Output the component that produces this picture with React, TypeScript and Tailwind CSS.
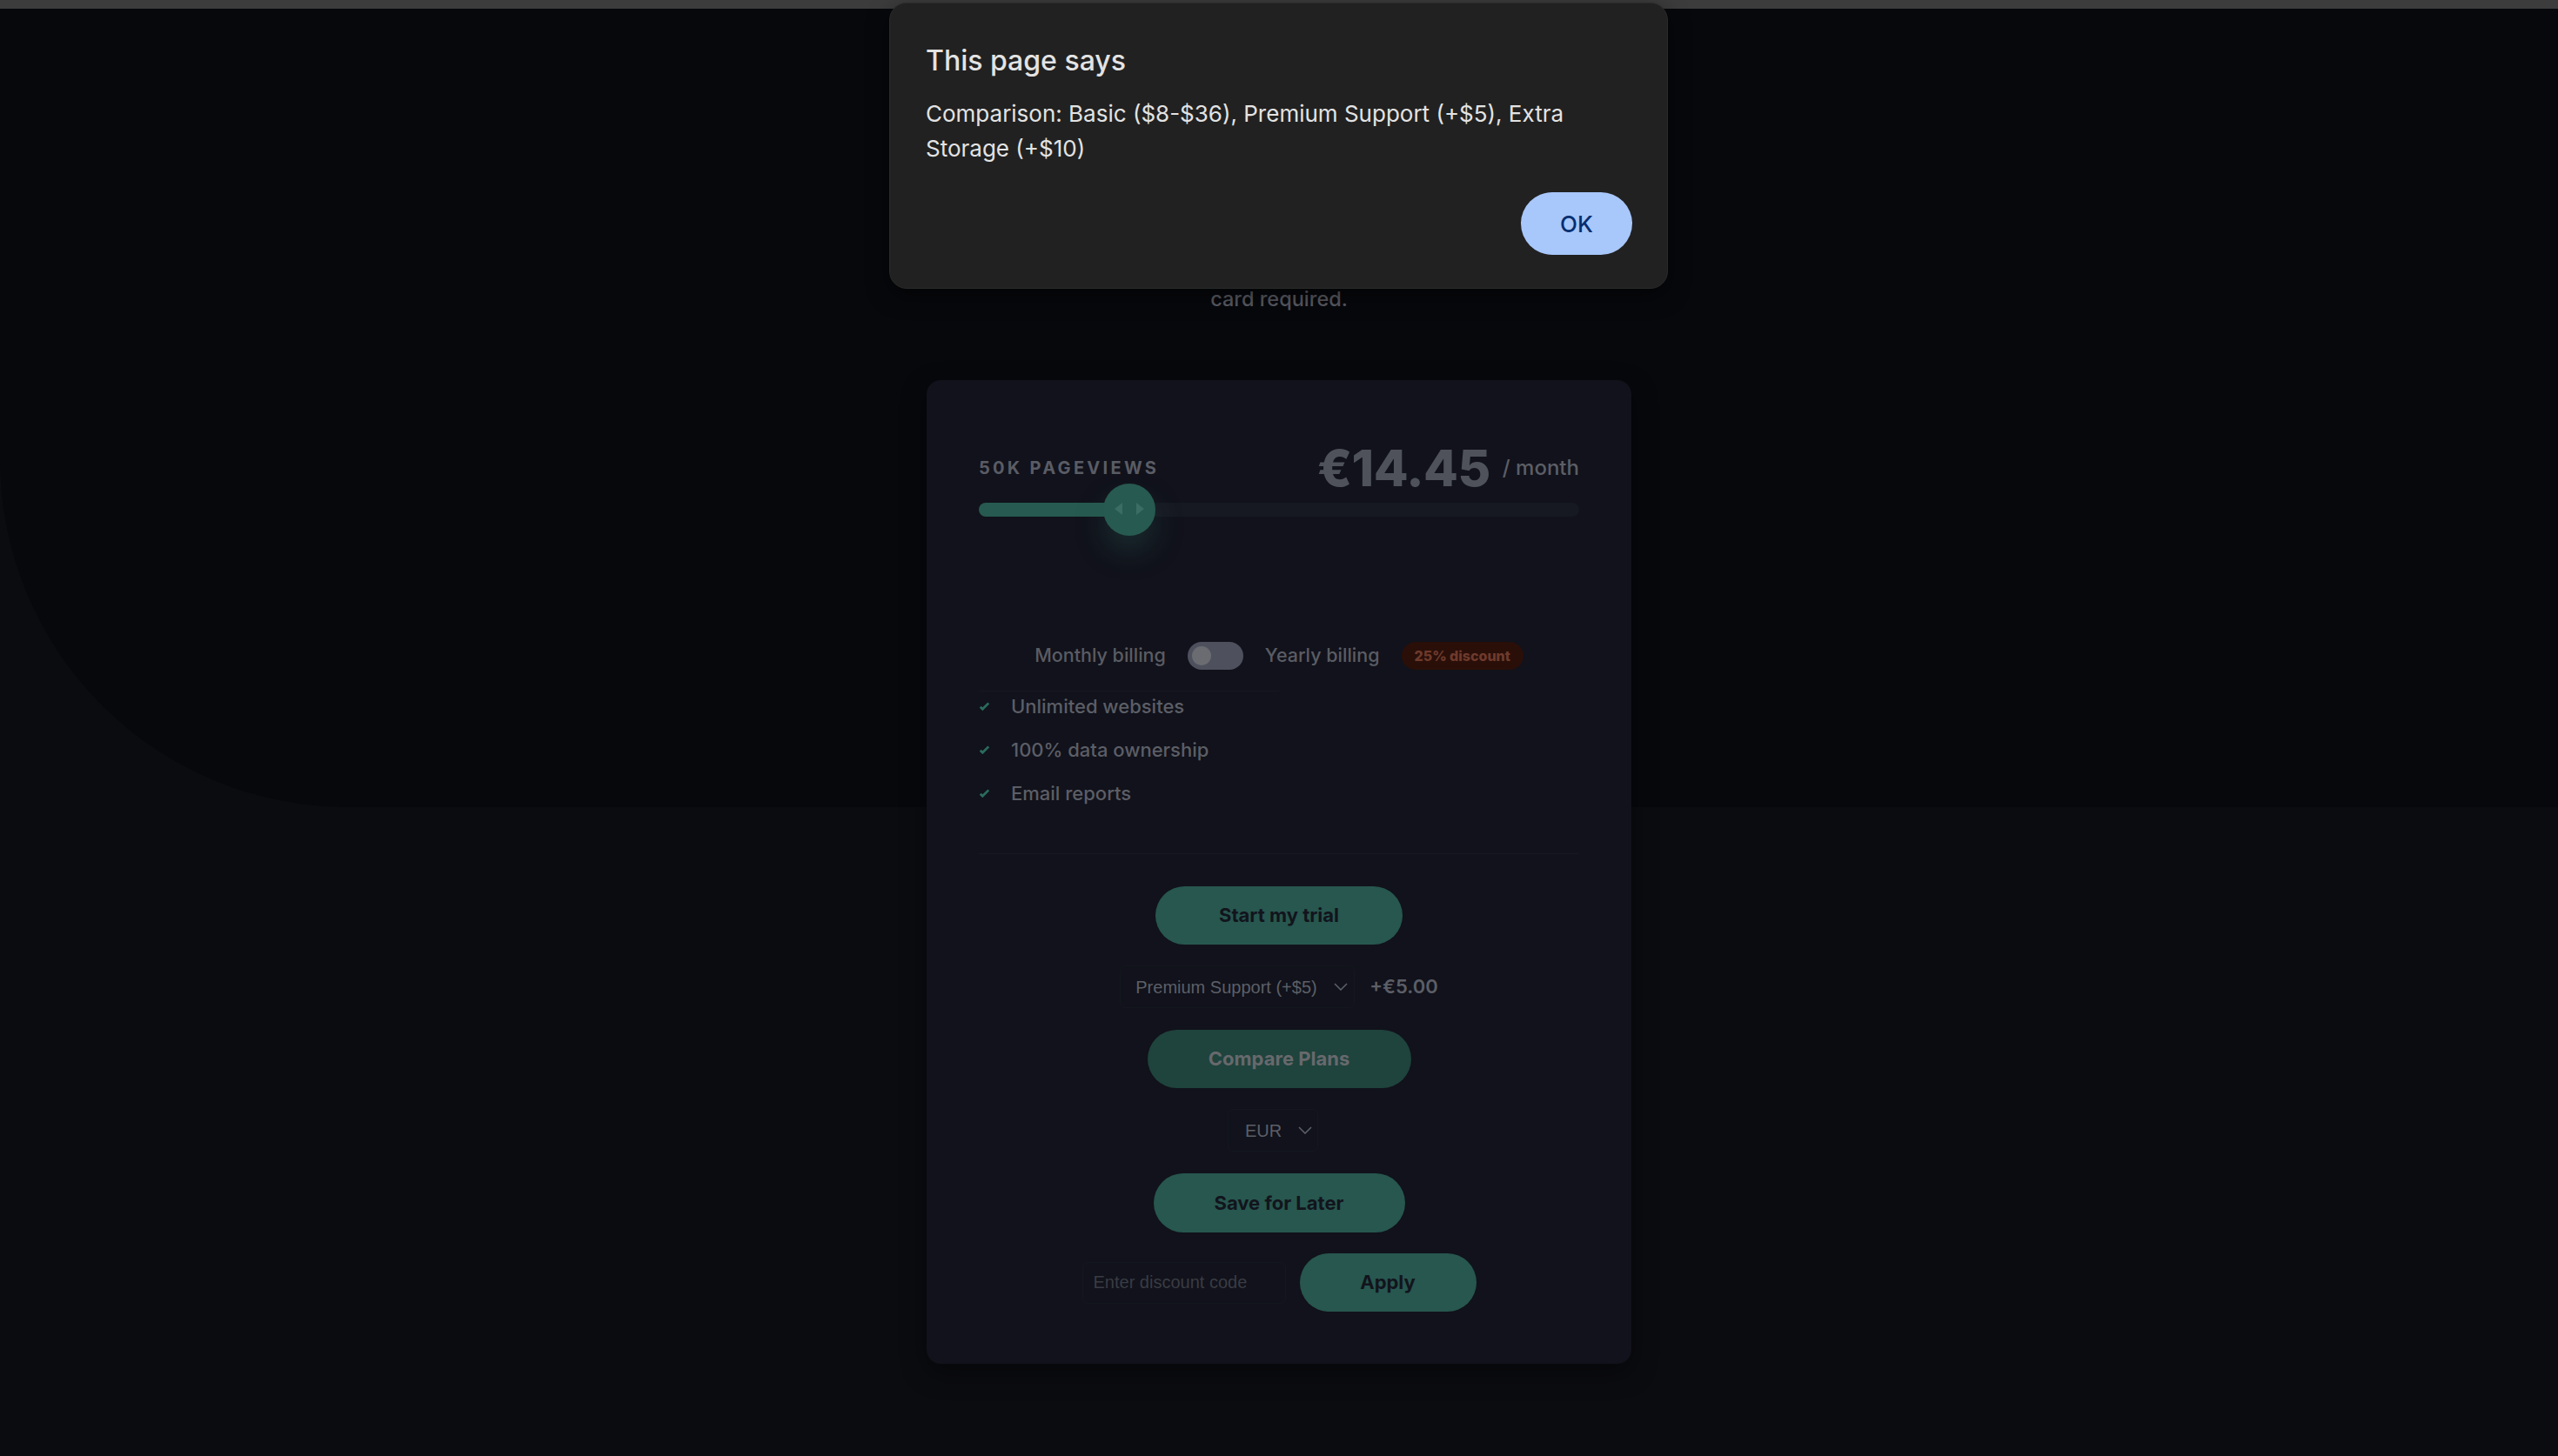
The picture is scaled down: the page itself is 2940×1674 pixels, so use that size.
import { useState } from 'react';

const features = ['Unlimited websites', '100% data ownership', 'Email reports'];

function Chevron() {
  return (
    <svg width="16" height="9" viewBox="0 0 16 9" fill="none">
      <path d="M1 1l7 7 7-7" stroke="#5c5f67" strokeWidth="1.6" />
    </svg>
  );
}

function Check() {
  return (
    <svg width="13" height="11" viewBox="0 0 9 8" fill="none">
      <path d="M1 4.134l1.907 1.908L7.949 1" stroke="#2a6b5d" strokeWidth="2" />
    </svg>
  );
}

export default function App() {
  const [yearly, setYearly] = useState(false);
  const [code, setCode] = useState('');

  return (
    <div className="relative h-[1674px] w-full overflow-hidden bg-[#0b0c10] font-['Inter',sans-serif]">
      {/* top band behind the header */}
      <div className="absolute inset-x-0 top-0 h-[928px] rounded-bl-[400px] bg-[#07080c]" />

      <div className="relative flex flex-col">
        <div className="h-[10px] w-full bg-[#3c3c3c]" />

        {/* header: the title and first line sit under the alert */}
        <header className="flex flex-col items-center pt-[314px] text-center">
          <p className="text-[23.5px] leading-[40px] font-medium text-[#5a5c64]">card required.</p>
        </header>

        <main className="mx-auto mt-[73px] flex w-[810px] flex-col rounded-[16px] bg-[#11121b] px-[60px] pt-[71px] pb-[60px] shadow-[0_10px_30px_rgba(0,0,0,0.45)]">
          <div className="flex h-[60px] items-center justify-between">
            <span className="text-[20px] font-bold tracking-[3.3px] text-[#5a5c65]">50K PAGEVIEWS</span>
            <div className="flex items-center gap-[14px]">
              <span className="text-[58px] leading-none font-extrabold tracking-[-0.5px] text-[#4f525a]">€14.45</span>
              <span className="text-[24px] font-medium text-[#5c5e66]">/ month</span>
            </div>
          </div>

          <div className="relative mt-[10px] h-[16px] w-full rounded-full bg-[#171922]">
            <div className="h-full w-[173px] rounded-full bg-[#275a50]" />
            <div className="absolute top-[-22px] left-[143px] h-[60px] w-[60px] rounded-full bg-[#275a50] shadow-[0_18px_32px_rgba(39,90,80,0.35)]">
              <svg width="60" height="60" viewBox="0 0 60 60">
                <polygon points="22,22 22,36 13,29" fill="#3b6d64" />
                <polygon points="38,22 38,36 47,29" fill="#3b6d64" />
              </svg>
            </div>
          </div>

          <div className="mt-[143px] flex h-[33px] items-center justify-center gap-[25px] text-[21.5px] font-medium text-[#5a5c64]">
            <span>Monthly billing</span>
            <button
              onClick={() => setYearly(!yearly)}
              className={`flex h-[32px] w-[64px] items-center rounded-full bg-[#4e515d] px-[5px] ${yearly ? 'justify-end' : 'justify-start'}`}
            >
              <span className="h-[22px] w-[22px] rounded-full bg-[#6b6c71]" />
            </button>
            <span>Yearly billing</span>
            <span className="flex h-[32px] items-center rounded-full bg-[#2a0f09] px-[15px] text-[16px] font-extrabold text-[#6e3a2c]">
              25% discount
            </span>
          </div>

          <div className="mt-[24px] h-px w-1/2 bg-[#161820]" />

          <ul className="flex flex-col gap-4">
            {features.map((f) => (
              <li key={f} className="flex items-center gap-6 text-[22px] leading-[34px] font-medium text-[#5c5e66]">
                <Check />
                {f}
              </li>
            ))}
          </ul>

          <div className="mt-[52px] h-px w-full bg-[#171922]" />

          <div className="mt-[37px] flex flex-col items-center text-[22px] font-bold">
            <button className="h-[67px] w-[284px] rounded-full bg-[#27574f] text-[#12141c]">Start my trial</button>

            <div className="mt-[24px] flex items-center gap-[17px]">
              <div className="flex h-[49px] w-[270px] items-center justify-between rounded-[6px] border border-[#15171f] pr-[7px] pl-[17px] font-['Liberation_Sans',Arial,sans-serif] text-[20px] font-normal text-[#5c5f67]">
                <span>Premium Support (+$5)</span>
                <Chevron />
              </div>
              <span className="text-[22px] font-semibold text-[#5c5e66]">+€5.00</span>
            </div>

            <button className="mt-[25px] h-[67px] w-[303px] rounded-full bg-[#1f433d] text-[#67696c]">Compare Plans</button>

            <div className="mt-[24px] mr-[14px] flex h-[49px] w-[104px] items-center justify-between rounded-[6px] border border-[#15171f] pr-[6px] pl-[19px] font-['Liberation_Sans',Arial,sans-serif] text-[20px] font-normal text-[#5c5f67]">
              <span>EUR</span>
              <Chevron />
            </div>

            <button className="mt-[25px] h-[68px] w-[289px] rounded-full bg-[#27574f] text-[#12141c]">Save for Later</button>

            <div className="mt-[24px] flex items-center gap-[16px]">
              <input
                value={code}
                onChange={(e) => setCode(e.target.value)}
                placeholder="Enter discount code"
                className="h-[48px] w-[234px] rounded-[6px] border border-[#15171f] bg-transparent px-[12px] font-['Liberation_Sans',Arial,sans-serif] text-[20px] font-normal text-[#5c5f67] outline-none placeholder:text-[#3a3c43]"
              />
              <button className="h-[67px] w-[203px] rounded-full bg-[#27574f] text-[#12141c]">Apply</button>
            </div>
          </div>
        </main>
      </div>

      {/* browser alert */}
      <div className="absolute top-[3px] left-[1022px] flex h-[329px] w-[895px] flex-col rounded-[20px] border border-[#2a2a2a] bg-[#212121] pt-[46px] pr-[40px] pb-[40px] pl-[41px] shadow-[0_8px_24px_rgba(0,0,0,0.5)]">
        <h2 className="text-[32px] leading-[40px] font-medium text-[#e3e3e3]">This page says</h2>
        <p className="mt-[21px] max-w-[760px] text-[26px] leading-[40px] text-[#e3e3e3]">
          Comparison: Basic ($8-$36), Premium Support (+$5), Extra Storage (+$10)
        </p>
        <div className="mt-[30px] flex justify-end">
          <button className="h-[72px] w-[128px] rounded-full bg-[#a8c7fa] text-[26px] font-medium text-[#062e6f]">OK</button>
        </div>
      </div>
    </div>
  );
}
